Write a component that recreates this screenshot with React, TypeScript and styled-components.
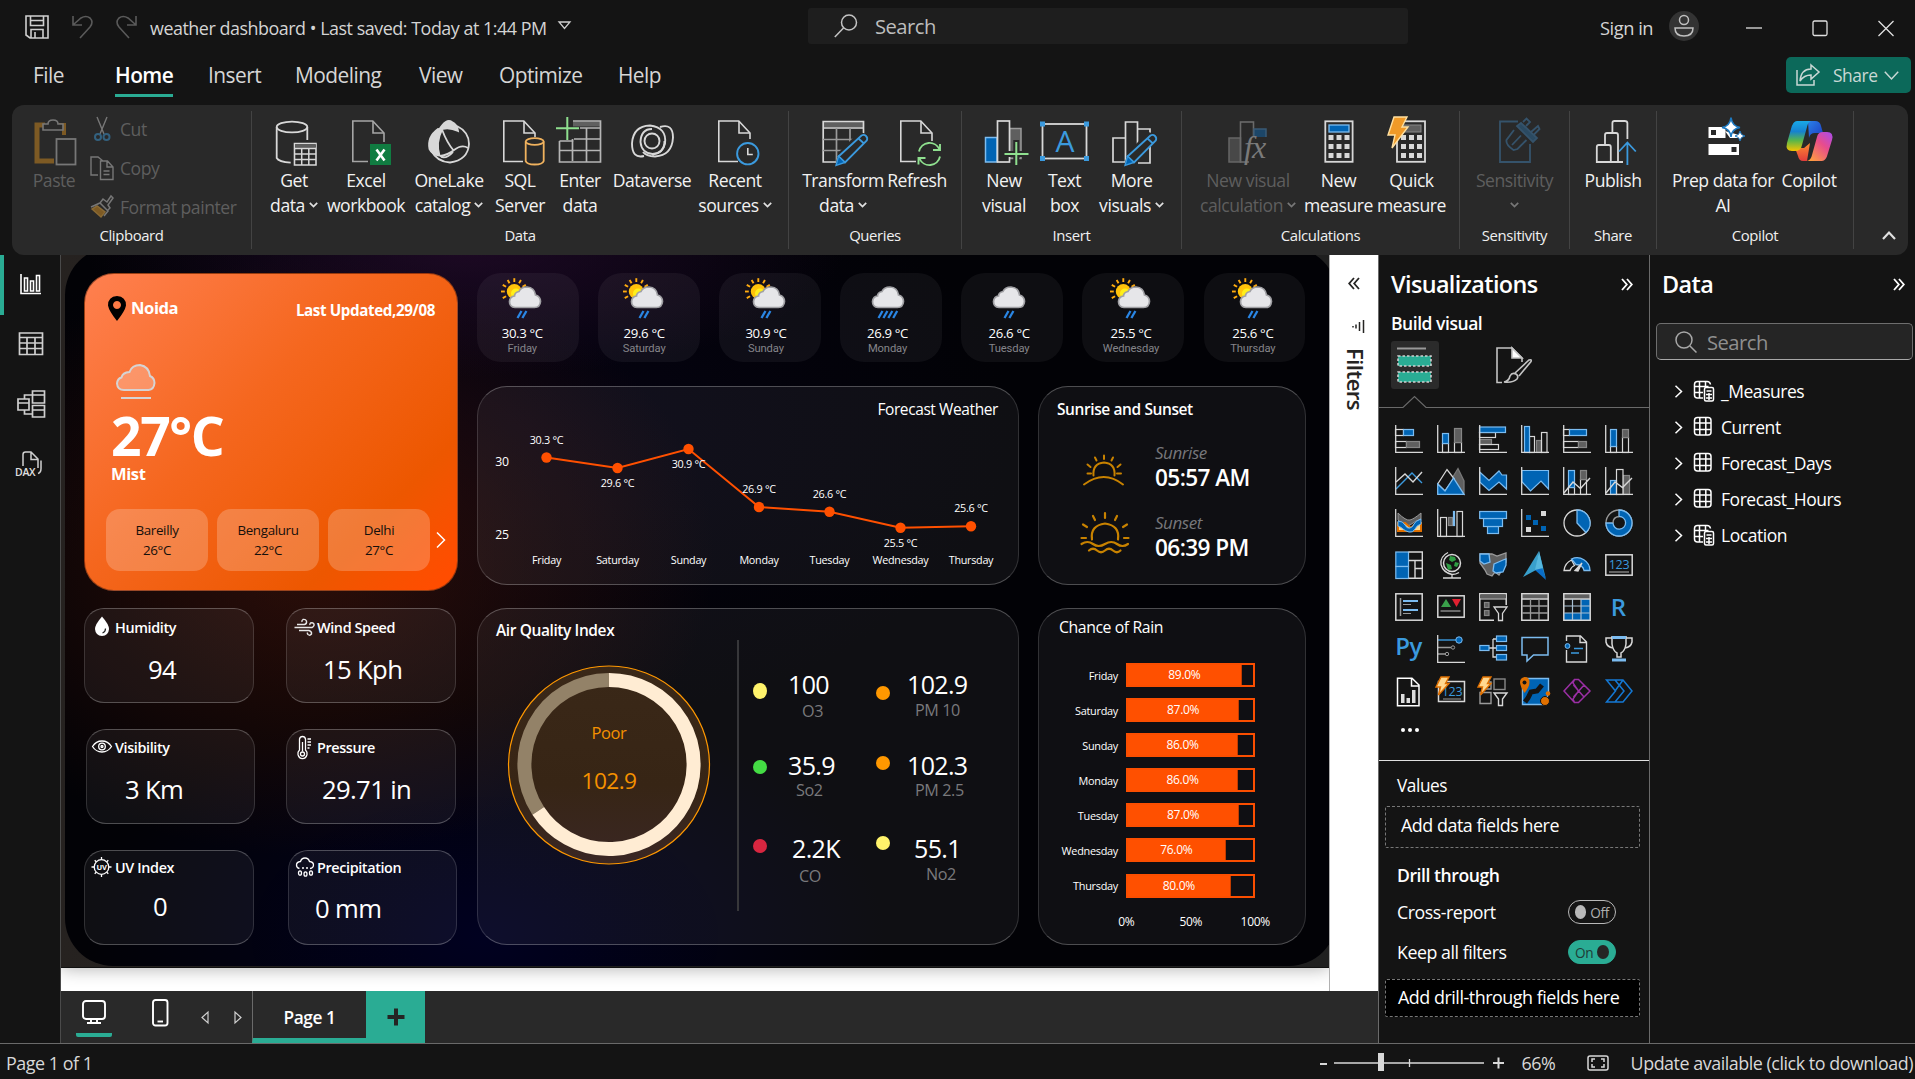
import React from "react";
import styled, { createGlobalStyle, css } from "styled-components";

const GlobalStyle = createGlobalStyle`
  * { box-sizing: border-box; letter-spacing: -0.026em; }
  html, body { margin: 0; padding: 0; background: #141414; }
  body {
    font-family: "Open Sans", "Noto Sans", sans-serif;
    color: #f2f2f2;
    overflow: hidden;
  }
  svg { display: block; flex: none; overflow: visible; }
`;

const teal = "#2aac94";

/* ---------- shell ---------- */
const Window = styled.div`
  width: 1915px;
  height: 1079px;
  display: flex;
  flex-direction: column;
  background: #141414;
  overflow: hidden;
  white-space: nowrap;
`;
const TitleBar = styled.header`
  height: 50px;
  flex: none;
  display: grid;
  grid-template-columns: 808px 600px 1fr;
`;
const TitleLeft = styled.div`
  display: flex;
  align-items: center;
  padding: 4px 0 0 25px;
`;
const QuickIcons = styled.div`
  display: flex;
  gap: 23px;
  width: 125px;
`;
const FileTitle = styled.div`
  font-size: 17.9px;
  color: #d4d4d4;
  margin: 2px 11px 0 0;
`;
const SearchBox = styled.div`
  height: 36px;
  margin-top: 8px;
  background: #1e1e1e;
  border-radius: 3px;
  display: flex;
  align-items: center;
  padding-left: 26px;
  gap: 17px;
  font-size: 20.2px;
  line-height: 36px;
  color: #bdbdbd;
`;
const TitleRight = styled.div`
  display: flex;
  align-items: center;
  padding: 4px 0 0 192px;
  font-size: 18.3px;
  color: #d4d4d4;
`;
const Avatar = styled.div`
  width: 30px;
  height: 30px;
  border-radius: 50%;
  background: #333;
  margin: 0 47px 3px 16px;
  display: grid;
  place-items: center;
`;
const WindowButtons = styled.div`
  display: flex;
  gap: 50px;
  margin-top: 2px;
`;

const MenuBar = styled.nav`
  height: 55px;
  flex: none;
  display: flex;
  padding: 6px 4px 0 33px;
`;
const MenuItem = styled.div<{ $w: number; $active?: boolean; $strong?: boolean }>`
  width: ${(p) => p.$w}px;
  font-size: 20.9px;
  line-height: 38px;
  color: ${(p) => (p.$active ? "#fff" : "#d6d6d6")};
  font-weight: ${(p) => (p.$active ? 600 : p.$strong ? 500 : 400)};
  span {
    display: inline-block;
    height: 41px;
    border-bottom: ${(p) => (p.$active ? `3px solid ${teal}` : "0")};
  }
`;
const ShareButton = styled.div`
  margin: 1px 0 0 auto;
  width: 125px;
  height: 36px;
  border-radius: 5px;
  background: #0c695a;
  display: flex;
  align-items: center;
  gap: 13px;
  padding-left: 10px;
  font-size: 17.4px;
  color: #c9d8d5;
  span { margin-right: -6px; }
`;

/* ---------- ribbon ---------- */
const Ribbon = styled.section`
  height: 150px;
  flex: none;
  margin: 0 7px 0 12px;
  padding: 6px 0;
  background: #292929;
  border-radius: 12px;
  display: flex;
`;
const RibbonGroup = styled.div<{ $w: number }>`
  width: ${(p) => p.$w}px;
  height: 138px;
  border-right: 1px solid #434343;
  display: flex;
  flex-direction: column;
`;
const RibbonBody = styled.div<{ $pad?: number }>`
  height: 108px;
  display: flex;
  padding-left: ${(p) => p.$pad ?? 0}px;
`;
const RibbonLabel = styled.div`
  font-size: 14.9px;
  line-height: 33px;
  height: 30px;
  text-align: center;
  color: #f0f0f0;
`;
const RibbonItem = styled.div<{ $w: number; $off?: boolean }>`
  width: ${(p) => p.$w}px;
  display: flex;
  flex-direction: column;
  align-items: center;
  padding-top: 6px;
  font-size: 17.6px;
  line-height: 24.5px;
  color: ${(p) => (p.$off ? "#5e5e5e" : "#f2f2f2")};
  > svg { margin-bottom: 3px; }
`;
const ItemLine = styled.div`
  display: flex;
  align-items: center;
  gap: 4px;
  height: 24.5px;
`;
const SmallCommands = styled.div`
  display: flex;
  flex-direction: column;
  margin-left: 3px;
  gap: 15px;
  font-size: 17.6px;
  line-height: 24px;
  color: #5e5e5e;
  padding-top: 6px;
`;
const SmallCommand = styled.div`
  display: flex;
  align-items: center;
  gap: 6px;
  height: 24px;
`;
const RibbonToggle = styled.div`
  flex: 1;
  display: flex;
  justify-content: center;
  align-items: flex-end;
  padding: 0 0 9px 21px;
  margin-right: 6px;
`;

/* ---------- main ---------- */
const Main = styled.main`
  height: 788px;
  flex: none;
  display: flex;
`;
const SideNav = styled.aside`
  width: 61px;
  border-right: 1px solid #4a4a4a;
`;
const NavItem = styled.div<{ $active?: boolean }>`
  height: 60px;
  display: flex;
  align-items: center;
  padding-left: ${(p) => (p.$active ? 11 : 15)}px;
  border-left: ${(p) => (p.$active ? `4px solid ${teal}` : "0")};
`;
const Center = styled.div`
  width: 1318px;
  display: flex;
  flex-direction: column;
`;
const Workspace = styled.div`
  height: 736px;
  display: flex;
`;
const PageArea = styled.div`
  width: 1268px;
  background: #fff;
  overflow: hidden;
`;
const Page = styled.div`
  height: 713px;
  overflow: hidden;
  background: linear-gradient(90deg, #262220 0%, #1d1d1d 40%, #202020 100%);
  box-shadow: 0 1px 16px rgba(0, 0, 0, 0.3);
  border-bottom: 1px solid #111;
`;
const Board = styled.div`
  width: 1272px;
  height: 719px;
  margin: -8px 0 0 4px;
  border-radius: 48px;
  display: flex;
  gap: 19px;
  padding: 26px 0 0 19px;
  background:
    radial-gradient(380px 130px at 400px 0px, rgba(46, 14, 52, 0.6), transparent),
    radial-gradient(400px 300px at 250px 310px, rgba(58, 18, 8, 0.75), transparent),
    radial-gradient(400px 240px at 420px 690px, rgba(0, 0, 50, 0.6), transparent),
    radial-gradient(500px 300px at 450px 180px, rgba(8, 4, 30, 0.5), transparent),
    #020206;
`;
const LeftColumn = styled.div`
  width: 374px;
`;
const RightColumn = styled.div`
  width: 829px;
`;

const CurrentCard = styled.div`
  height: 318px;
  border-radius: 30px;
  padding: 22px 22px 0 21px;
  background: linear-gradient(135deg, #ff8050 0%, #f5671f 42%, #ed5700 78%, #ff4d00 96%);
  border: 1px solid rgba(90, 40, 20, 0.6);
  color: #fff;
`;
const CurrentHeader = styled.div`
  display: flex;
  height: 29px;
  padding-left: 1px;
`;
const Place = styled.div`
  font-size: 16.6px;
  font-weight: 700;
  line-height: 24px;
  margin-left: 4px;
`;
const Updated = styled.div`
  margin-left: auto;
  font-size: 15.2px;
  font-weight: 700;
  line-height: 29px;
`;
const CloudSlot = styled.div`
  padding: 39px 0 0 10px;
  height: 84px;
`;
const Temperature = styled.div`
  font-size: 53.4px;
  font-weight: 700;
  line-height: 54px;
  padding-left: 5px;
`;
const Condition = styled.div`
  font-size: 16.6px;
  font-weight: 700;
  line-height: 24px;
  margin: -1px 0 23px 5px;
`;
const CityRow = styled.div`
  display: flex;
  gap: 9px;
  align-items: center;
`;
const City = styled.div`
  flex: none;
  width: 102px;
  height: 62px;
  border-radius: 14px;
  background: rgba(255, 255, 255, 0.21);
  color: #15100c;
  font-size: 13.4px;
  line-height: 20px;
  font-weight: 500;
  text-align: center;
  padding-top: 11px;
`;
const CityNext = styled.div`
  margin-left: -3px;
`;

const glass = css`
  border: 1px solid rgba(255, 255, 255, 0.14);
  border-top-color: rgba(255, 255, 255, 0.26);
  border-bottom-color: rgba(255, 255, 255, 0.26);
  background: rgba(255, 255, 255, 0.055);
`;

const MetricGrid = styled.div`
  margin-top: 17px;
  display: grid;
  grid-template-columns: 202px 172px;
  grid-auto-rows: 95px;
  row-gap: 26px;
`;
const MetricCard = styled.div<{ $dx?: number }>`
  ${glass}
  margin-left: ${(p) => p.$dx ?? 0}px;
  width: ${(p) => (p.$dx ? 169 : 170)}px;
  height: 95px;
  border-radius: 20px;
`;
const MetricTitle = styled.div<{ $dx?: number; $up: number }>`
  display: flex;
  align-items: center;
  gap: 2px;
  height: 26px;
  margin: ${(p) => 5 - p.$up}px 0 ${(p) => p.$up}px ${(p) => 6 - (p.$dx ?? 0)}px;
  font-size: 14.4px;
  font-weight: 600;
  color: #fff;
`;
const MetricValue = styled.div<{ $x: number; $y?: number }>`
  margin-top: ${(p) => 13 + (p.$y ?? 0)}px;
  padding-left: ${(p) => p.$x}px;
  font-size: 25.7px;
  line-height: 34px;
  color: #fff;
`;

const DayRow = styled.div`
  display: flex;
  gap: 19.6px;
`;
const DayCard = styled.div<{ $shift: number }>`
  width: 101.5px;
  height: 89px;
  border-radius: 24px;
  background: rgba(255, 255, 255, 0.05);
  padding: 4px ${(p) => p.$shift * 2}px 0 0;
  display: flex;
  flex-direction: column;
  align-items: center;
`;
const DayTemp = styled.div`
  font-size: 13.2px;
  line-height: 20px;
  margin-top: 2px;
  color: #fff;
`;
const DayName = styled.div`
  font-family: Roboto, sans-serif;
  font-size: 11.2px;
  letter-spacing: -0.01em;
  line-height: 14px;
  margin-top: -1px;
  color: #85858a;
`;

const PanelRow = styled.div<{ $h: number; $mt: number }>`
  display: flex;
  justify-content: space-between;
  height: ${(p) => p.$h}px;
  margin-top: ${(p) => p.$mt}px;
`;
const Panel = styled.div<{ $w: number }>`
  ${glass}
  width: ${(p) => p.$w}px;
  border-radius: 30px;
`;
const PanelTitle = styled.div<{ $pad: number; $strong?: boolean; $lh?: number }>`
  font-size: ${(p) => (p.$strong ? 15.5 : 15.8)}px;
  font-weight: ${(p) => (p.$strong ? 600 : 400)};
  line-height: ${(p) => p.$lh ?? 45}px;
  height: 46px;
  padding-left: ${(p) => p.$pad}px;
  color: #fff;
`;
const SunRow = styled.div<{ $h: number }>`
  display: flex;
  height: ${(p) => p.$h}px;
  padding-left: 40px;
`;
const SunIconSlot = styled.div`
  width: 76px;
`;
const SunText = styled.div`
  padding-top: 9px;
`;
const SunLabel = styled.div`
  font-size: 17px;
  font-style: italic;
  line-height: 22px;
  color: #77777b;
`;
const SunTime = styled.div`
  font-size: 22.6px;
  font-weight: 600;
  line-height: 28px;
  color: #fff;
`;

const AirPanel = styled(Panel)`
  display: flex;
`;
const AirLeft = styled.div`
  width: 259px;
`;
const GaugeSlot = styled.div`
  padding: 10px 0 0 30px;
`;
const AirDivider = styled.div`
  width: 2px;
  height: 271px;
  margin-top: 31px;
  background: #37373a;
`;
const Pollutants = styled.div`
  display: grid;
  grid-template-columns: 123px auto;
  grid-template-rows: 81px 83px 60px;
  padding: 60px 0 0 14px;
`;
const Pollutant = styled.div`
  display: flex;
`;
const Dot = styled.div<{ $c: string; $y: number; $tall?: boolean }>`
  width: 14px;
  height: ${(p) => (p.$tall ? 16 : 14)}px;
  border-radius: 50%;
  background: ${(p) => p.$c};
  margin-top: ${(p) => p.$y}px;
`;
const PollutantText = styled.div`
  display: flex;
  flex-direction: column;
`;
const PollutantValue = styled.div<{ $x: number }>`
  padding-left: ${(p) => p.$x}px;
  font-size: 25px;
  line-height: 31px;
  height: 32px;
  color: #fff;
`;
const PollutantName = styled.div<{ $x: number; $y: number }>`
  padding-left: ${(p) => p.$x}px;
  margin-top: ${(p) => p.$y}px;
  font-size: 16.2px;
  line-height: 20px;
  color: #79797c;
`;

const RainRows = styled.div`
  padding-top: 8px;
  display: flex;
  flex-direction: column;
  gap: 11.1px;
`;
const RainRow = styled.div`
  display: grid;
  grid-template-columns: 79px 129px;
  column-gap: 8px;
  height: 24px;
  align-items: center;
`;
const RainDay = styled.div`
  text-align: right;
  font-size: 10.9px;
  color: #fff;
`;
const RainTrack = styled.div`
  height: 24px;
  display: flex;
  border: 2px solid #fb4e00;
`;
const RainFill = styled.div`
  background: #ff5000;
  border-right: 1px solid #c23c00;
  color: #fff;
  font-size: 12px;
  line-height: 19px;
  text-align: center;
`;
const RainAxis = styled.div`
  display: grid;
  grid-template-columns: 64.5px 64.5px 64.5px;
  padding-left: 55px;
  margin-top: 14px;
  font-size: 12px;
  line-height: 20px;
  text-align: center;
  color: #fff;
`;

const FiltersPane = styled.div`
  width: 50px;
  background: #fff;
  border-left: 1px solid #b0b0b0;
  border-right: 1px solid #6a6a6a;
  display: flex;
  flex-direction: column;
  align-items: flex-end;
  color: #252423;
  padding: 22px 11px 0 0;
`;
const PaneArrow = styled.div`
  padding-right: 7px;
  margin-bottom: 30px;
`;
const FunnelSlot = styled.div`
  padding-right: 2px;
`;
const FiltersText = styled.div`
  writing-mode: vertical-rl;
  font-size: 22.2px;
  font-weight: 600;
  line-height: 24px;
  margin: 15px 0 0;
`;

const TabBar = styled.div`
  height: 52px;
  background: #292929;
  display: flex;
  border-right: 1px solid #6a6a6a;
`;
const ViewToggle = styled.div<{ $w: number; $ml: number; $active?: boolean }>`
  width: ${(p) => p.$w}px;
  margin-left: ${(p) => p.$ml}px;
  height: 46px;
  padding-top: 8px;
  display: flex;
  justify-content: center;
  border-bottom: ${(p) => (p.$active ? `4px solid ${teal}` : "0")};
  border-radius: 2px;
`;
const TabArrows = styled.div`
  display: flex;
  gap: 25px;
  align-items: center;
  width: 51px;
  margin-left: 32px;
  flex: 1;
`;
const PageTab = styled.div`
  width: 114px;
  border-left: 1px solid #6a6a6a;
  border-bottom: 5px solid ${teal};
  font-size: 17.3px;
  font-weight: 600;
  line-height: 53px;
  height: 52px;
  text-align: center;
  color: #fff;
`;
const AddTab = styled.div`
  width: 59px;
  background: ${teal};
  display: grid;
  place-items: center;
`;
const TabLeft = styled.div`
  width: 191px;
  display: flex;
`;

/* ---------- visualizations pane ---------- */
const VizPane = styled.section`
  width: 271px;
  border-right: 1px solid #6a6a6a;
`;
const PaneHead = styled.div`
  display: flex;
  align-items: center;
  justify-content: space-between;
  height: 58px;
  padding: 0 16px 0 12px;
  font-size: 23.4px;
  font-weight: 600;
  color: #fff;
`;
const BuildTitle = styled.div`
  font-size: 17.5px;
  font-weight: 600;
  line-height: 20px;
  padding-left: 12px;
  color: #fff;
`;
const ModeRow = styled.div`
  display: flex;
  gap: 57px;
  padding: 8px 0 0 12px;
  height: 63px;
`;
const ModeButton = styled.div<{ $active?: boolean }>`
  width: 48px;
  height: 48px;
  border-radius: 3px;
  background: ${(p) => (p.$active ? "#2b2b2b" : "transparent")};
  padding: 6px 0 0 ${(p) => (p.$active ? 6 : 0)}px;
`;
const VizGrid = styled.div`
  display: grid;
  grid-template-columns: repeat(6, 28px);
  grid-auto-rows: 28px;
  gap: 14px;
  padding: 17px 0 0 16px;
`;
const MoreDots = styled.div`
  display: flex;
  gap: 3px;
  padding: 23px 0 28px 22px;
  i { width: 4px; height: 4px; border-radius: 50%; background: #fff; }
`;
const Wells = styled.div`
  border-top: 1px solid #e0e0e0;
  padding: 14px 9px 0 6px;
  color: #fff;
  font-size: 17.9px;
`;
const WellTitle = styled.div<{ $strong?: boolean }>`
  font-size: ${(p) => (p.$strong ? 17.6 : 17.3)}px;
  font-weight: ${(p) => (p.$strong ? 600 : 400)};
  line-height: 22px;
  margin-top: ${(p) => (p.$strong ? 16 : 0)}px;
  padding-left: 12px;
`;
const DropBox = styled.div<{ $h: number; $dark?: boolean }>`
  height: ${(p) => p.$h}px;
  margin-top: ${(p) => (p.$dark ? 15 : 9)}px;
  border: 1px dashed #777;
  border-radius: 2px;
  background: ${(p) => (p.$dark ? "#000" : "transparent")};
  padding-left: ${(p) => (p.$dark ? 12 : 15)}px;
  line-height: ${(p) => p.$h - (p.$dark ? 3 : 5)}px;
`;
const SettingRow = styled.div`
  display: flex;
  justify-content: space-between;
  align-items: center;
  height: 24px;
  margin-top: 14px;
  padding: 0 24px 0 12px;
  font-size: 17.8px;
  & + & { margin-top: 16px; }
`;
const Switch = styled.div<{ $on?: boolean }>`
  width: 48px;
  height: 24px;
  border-radius: 12px;
  border: 1px solid ${(p) => (p.$on ? teal : "#b8b8b8")};
  background: ${(p) => (p.$on ? teal : "transparent")};
  color: ${(p) => (p.$on ? "#1f3b36" : "#b0b0b0")};
  display: flex;
  flex-direction: ${(p) => (p.$on ? "row-reverse" : "row")};
  align-items: center;
  gap: 4px;
  padding: 0 6px;
  font-size: 13.6px;
  &::before {
    content: "";
    width: 12px;
    height: 14px;
    border-radius: 50%;
    background: ${(p) => (p.$on ? "#252525" : "#b8b8b8")};
  }
`;

/* ---------- data pane ---------- */
const DataPane = styled.section`
  width: 265px;
  padding: 0 2px 0 6px;
`;
const DataHead = styled(PaneHead)`
  padding: 0 8px 0 6px;
`;
const DataSearch = styled.div`
  height: 37px;
  margin-top: 10px;
  border: 1px solid #6e6e6e;
  border-bottom-color: #a8a8a8;
  border-radius: 5px;
  background: #252525;
  display: flex;
  align-items: center;
  gap: 10px;
  padding-left: 18px;
  font-size: 20.2px;
  color: #8f8f8f;
`;
const TableRow = styled.div`
  display: flex;
  align-items: center;
  height: 36px;
  font-size: 17.5px;
  padding-left: 18px;
  color: #fff;
`;
const TableList = styled.div`
  padding-top: 13px;
`;
const TableIconSlot = styled.div`
  width: 28px;
  margin-left: 10px;
`;

/* ---------- status bar ---------- */
const StatusBar = styled.footer`
  height: 36px;
  border-top: 1px solid #6a6a6a;
  display: flex;
  align-items: center;
  padding: 2px 2px 0 6px;
  font-size: 17.9px;
  color: #d8d8d8;
`;
const ZoomControl = styled.div`
  margin-left: auto;
  display: flex;
  align-items: center;
`;
const ZoomText = styled.div`
  width: 65px;
  margin-left: 18px;
`;
const UpdateText = styled.div`
  margin-left: 22px;
`;

/* ---------- glyphs ---------- */
const W = "#d8d8d8";
const B = "#0064b4";
const L = "#7cbcf0";
const G = "#9a9a9a";
const g = "#5f5f5f";
const C = "#3b9ade";
const N = "#8fe08f";

const Caret = ({ c = "#e0e0e0" }: { c?: string }) => (
  <svg width="9" height="6" viewBox="0 0 9 6" fill="none" stroke={c} strokeWidth="1.7"><path d="M.8 .8 4.5 4.6 8.2 .8" /></svg>
);
const DoubleChevron = ({ left }: { left?: boolean }) => (
  <svg width="12" height="13" viewBox="0 0 12 13" fill="none" stroke={left ? "#252423" : "#fff"} strokeWidth="1.8">
    {left ? <path d="M6 1 1.2 6.5 6 12M11 1 6.2 6.5 11 12" /> : <path d="M1 1 5.8 6.5 1 12M6 1l4.8 5.5L6 12" />}
  </svg>
);
const PagePath = ({ x = 11, w = 32, c = W, cut = 24, foot = 18 }: { x?: number; w?: number; c?: string; cut?: number; foot?: number }) => (
  <g fill="none" stroke={c} strokeWidth="1.6">
    <path d={`M${x + foot + 2} 44.5H${x + 0.8}V4h${w - 12}l11.2 12V${cut}`} />
    <path d={`M${x + w - 11} 4v12h11`} />
  </g>
);
const Pencil = () => (
  <g>
    <path d="M20 49 24 35 44 15l8 2 1 5-22 22z" fill="#292929" />
    <path d="M23.5 39.5 46.5 18.5q2.5-1.5 4.5 .5t.8 4.5L30 45.5zM43.5 21.5l5.5 5" fill="none" stroke={C} strokeWidth="1.8" />
    <path d="M21 48.5 23.5 39l6.5 6.5z" fill={B} stroke={C} strokeWidth="1.4" />
  </g>
);
const CalcKeys = ({ x, y }: { x: number; y: number }) => (
  <g fill={W}>
    {[0, 1, 2].map((r) => [0, 1, 2].map((c) => <rect key={`${r}${c}`} x={x + c * 8} y={y + r * 9} width="5" height="5" />))}
  </g>
);

type RibbonGlyph = "get" | "excel" | "lake" | "sql" | "enter" | "dataverse" | "recent" | "transform" | "refresh" | "visual" | "text" | "more" | "calc" | "measure" | "quick" | "sens" | "publish" | "prep" | "copilot" | "paste";

const ribbonGlyphs: Record<RibbonGlyph, React.ReactNode> = {
  paste: (
    <g transform="translate(3 0)">
      <path d="M16 8H8v36h17" fill="none" stroke="#7d5a24" strokeWidth="5" />
      <path d="M30 8h5v10" fill="none" stroke="#7d5a24" strokeWidth="4" />
      <path d="M14 13V7h5q0-4 5-4t5 4h5v6z" fill="#292929" stroke="#777" strokeWidth="1.6" />
      <rect x="27.5" y="22" width="19" height="25.5" fill="#292929" stroke="#777" strokeWidth="1.8" />
    </g>
  ),
  get: (
    <g fill="none" stroke={W} strokeWidth="1.8">
      <ellipse cx="26" cy="10" rx="15.3" ry="5.4" />
      <path d="M10.7 10v31q2 4 14 4.6M41.3 10v13" />
      <path d="M28.5 26.500h21.500v21.500h-21.500z" strokeWidth="1.6" />
      <path d="M29 29h21" stroke={g} strokeWidth="3.6" />
      <path d="M28.500 31.500h21.500M28.500 37h21.500M28.500 42.500h21.500M35.700 31v17M42.800 31v17" strokeWidth="1.500" />
    </g>
  ),
  excel: (
    <g>
      <PagePath x={14} c="#a5a5a5" cut={25} foot={14} />
      <rect x="32" y="27" width="21" height="21" fill="#107c41" />
      <path d="M38.500 32.500 46.500 43.500M46.500 32.500 38.500 43.500" stroke="#fff" strokeWidth="2.600" />
    </g>
  ),
  lake: (
    <g fill="none" stroke={W} strokeWidth="1.800">
      <path d="M36 9Q48 15 48 27q-1 16-19 18.500Q16 45 10 33" />
      <path d="M18 13Q25 1 31 5q5 2 6 9-10-5-19-1z" fill={W} />
      <path d="M17 12Q6 20 8.500 32q3 6 10 6.500-4-13 2.500-26z" fill={W} />
      <path d="M21 12.500Q26 26 33 34M19 39Q27 38 33 33q8-6 14-2M20 40q6 2 12-5" />
    </g>
  ),
  sql: (
    <g>
      <PagePath x={11} cut={20} />
      <g fill="none" stroke="#f0b25e" strokeWidth="1.800">
        <ellipse cx="42.700" cy="24.500" rx="9" ry="3.300" />
        <path d="M33.700 24.500v19.500q1 3.500 9 3.500t9-3.500V24.500" />
      </g>
    </g>
  ),
  enter: (
    <g fill="none" stroke="#b5b5b5" strokeWidth="1.700">
      <path d="M21 7h27" stroke={g} strokeWidth="5" />
      <path d="M21 4h27.500v41H7.500V24M28 11h20M22 22h26M7.500 33.500h41M20.500 22v22M34.500 11v34M7.500 24h14" />
      <path d="M4 11.300h23M15.300 0v23" stroke={N} strokeWidth="2" />
    </g>
  ),
  dataverse: (
    <g fill="none" stroke={W} strokeWidth="1.900">
      <ellipse cx="28" cy="24" rx="7.500" ry="7.500" />
      <path d="M20 39Q8 42 8 26.500 9 9 26 8.500q17 2 15 18-2 10-12.500 10.500-11-1-12-12Q17 12 28 12" />
      <path d="M36 10Q49 6 49 20.500 48 38.500 31 39.500 22 39 19 35M40.500 24q0 12-12 13.500" />
    </g>
  ),
  recent: (
    <g>
      <PagePath x={11} cut={22} />
      <circle cx="40.800" cy="36.700" r="10.700" fill="none" stroke={C} strokeWidth="1.900" />
      <path d="M40.800 31v6.500h5" fill="none" stroke={W} strokeWidth="1.600" />
    </g>
  ),
  transform: (
    <g>
      <path d="M8 7.500h40" stroke={g} strokeWidth="5" />
      <path d="M48.500 18V4.500H8.200v40.500H22M8 11h40" fill="none" stroke={W} strokeWidth="1.700" />
      <path d="M21.500 11v34M35 11v20M8 22.500h32M8 33.500h20" fill="none" stroke="#999" strokeWidth="1.700" />
      <Pencil />
    </g>
  ),
  refresh: (
    <g>
      <PagePath x={11} cut={24} foot={14} />
      <g fill="none" stroke={N} strokeWidth="1.900">
        <path d="M30 34.500a10.800 10.800 0 0 1 20.500-2M51 27v6h-7M51 39.500a10.800 10.800 0 0 1-20.500 2M29.500 47.500v-6.500h7" />
      </g>
    </g>
  ),
  visual: (
    <g>
      <rect x="9.500" y="20.500" width="11.500" height="24.500" fill={B} stroke={L} strokeWidth="1.500" />
      <rect x="33.500" y="11.500" width="11.500" height="30" fill={g} stroke={G} strokeWidth="1.500" />
      <rect x="21.500" y="4" width="12" height="41" fill="#292929" stroke={W} strokeWidth="1.700" />
      <path d="M27 37h26M40.300 23v25" stroke="#292929" strokeWidth="6" />
      <path d="M28.500 37h24M40.300 25v23" stroke={N} strokeWidth="2" />
    </g>
  ),
  text: (
    <g>
      <rect x="5.500" y="7" width="44" height="34.500" fill="none" stroke={W} strokeWidth="1.800" />
      {[[3, 4.500], [47, 4.500], [3, 39], [47, 39]].map(([x, y]) => <rect key={`${x}${y}`} x={x} y={y} width="5" height="5" fill={C} />)}
      <text x="27.500" y="35" fontSize="30" textAnchor="middle" fill={C} fontWeight="400">A</text>
    </g>
  ),
  more: (
    <g>
      <path d="M21.500 45H9V21h12.500M21.500 45V5h12v34M33.500 12H46v34H34" fill="none" stroke={W} strokeWidth="1.700" />
      <Pencil />
    </g>
  ),
  calc: (
    <g>
      <rect x="9" y="21" width="11.500" height="24" fill="#484848" stroke="#666" strokeWidth="1.500" />
      <rect x="20.500" y="5" width="13" height="40" fill="none" stroke="#6a6a6a" strokeWidth="1.600" />
      <path d="M34 12h12v10H34z" fill="#1c4668" stroke="#3a5a74" strokeWidth="1.500" />
      <rect x="29" y="20" width="20" height="28" fill="#292929" />
      <text x="24" y="41" fontSize="32" fontStyle="italic" fontFamily="Liberation Serif, serif" fill="#7a7a7a">fx</text>
    </g>
  ),
  measure: (
    <g>
      <rect x="14.300" y="4.300" width="27.300" height="40.500" fill="none" stroke={W} strokeWidth="1.800" />
      <rect x="18" y="8" width="20" height="7" fill={B} stroke={L} strokeWidth="1.300" />
      <CalcKeys x={17.500} y={18} />
    </g>
  ),
  quick: (
    <g>
      <rect x="13" y="4.300" width="28" height="40.500" fill="none" stroke={W} strokeWidth="1.800" />
      <rect x="18" y="8" width="19" height="7" fill={g} stroke="#888" />
      <CalcKeys x={17} y={18} />
      <path d="M10 0h13l-5 10h6L8 31l3-13H4z" fill="#f09a28" stroke="#ffe0a0" strokeWidth="1.400" />
    </g>
  ),
  sens: (
    <g fill="none" stroke="#35536b" strokeWidth="1.800">
      <path d="M31 4.500H13v40.500h30V27" />
      <path d="M34 6 30 9 46 25l4-4z" fill="#2b4a61" />
      <path d="M36 5 39.500 1.500 43 5l-4 4M44 15l7-6 1.500 3-6 6" />
      <path d="M27 13 19.500 23q-1 5 7 10l4-1 9-9M25 28 34 18.500" />
    </g>
  ),
  publish: (
    <g fill="none" stroke={W} strokeWidth="1.800">
      <path d="M11.800 45V30q0-2 2-2h10q2 0 2 2v15zM20 27V18q0-2 2-2h9q2 0 2 2v27M27.400 15V6q0-2 2-2h10q3 0 3 2v16M26 45h12" />
      <path d="M42.400 48V26M34 34.500l8.400-9 8.400 9" stroke={C} />
    </g>
  ),
  prep: (
    <g>
      <path d="M13.500 10h17v11h-17zM13.500 27h30.500v11h-30.500zM30 14l5 7h9v-3" fill="#fff" />
      <path d="M16 13h5v5h-5zM36.500 30h5v5h-5z" fill="#292929" />
      <path d="M36 .5q1 8.500 9 10-8 1-9 9.500-1-8.500-9-9.500 8-1.500 9-10z" fill="#fff" stroke="#1c78c0" strokeWidth="1.600" />
      <path d="M45 14q.6 4.500 5 5-4.400.6-5 5-.6-4.400-5-5 4.400-.6 5-5z" fill="#fff" stroke="#1c78c0" />
    </g>
  ),
  copilot: (
    <g>
      <defs>
        <linearGradient id="cpA" x1="0" y1="0" x2="0" y2="1"><stop offset="0" stopColor="#19a9e8" /><stop offset=".35" stopColor="#1682d0" /><stop offset=".65" stopColor="#58b64a" /><stop offset="1" stopColor="#f5c400" /></linearGradient>
        <linearGradient id="cpB" x1="1" y1="0" x2=".2" y2="1"><stop offset="0" stopColor="#a84cf0" /><stop offset=".45" stopColor="#e84c8c" /><stop offset="1" stopColor="#ff9c40" /></linearGradient>
        <linearGradient id="cpC" x1="0" y1="0" x2="1" y2="1"><stop offset="0" stopColor="#2a80e8" /><stop offset="1" stopColor="#1c3cc0" /></linearGradient>
        <linearGradient id="cpD" x1="0" y1="0" x2="0" y2="1"><stop offset="0" stopColor="#ff8c30" /><stop offset="1" stopColor="#e03c3c" /></linearGradient>
      </defs>
      <path d="M27 4h7q5 0 6 5l2 7h-8q-5 0-6 5z" fill="url(#cpC)" />
      <path d="M14 31h9l6-5-3 18h-4q-4 0-5-5z" fill="url(#cpD)" />
      <path d="M16 4h14q-3 1-4 6l-5 18q-1 6-7 6h-3q-7 0-5-8l4-14q2-8 6-8z" fill="url(#cpA)" />
      <path d="M41 44H26q4-1 5-6l5-18q1-5 6-5h4q7 0 5 8l-4 13q-2 8-6 8z" fill="url(#cpB)" />
    </g>
  ),
};
const RibbonIcon = ({ name }: { name: RibbonGlyph }) => <svg width="56" height="48" viewBox="0 0 56 48">{ribbonGlyphs[name]}</svg>;

type Cmd = { icon: RibbonGlyph; w: number; lines: string[]; caret?: boolean; off?: boolean };
const groups: { label: string; w: number; pad?: number; items: Cmd[] }[] = [
  { label: "Data", w: 537, pad: 11, items: [
    { icon: "get", w: 62, lines: ["Get", "data"], caret: true },
    { icon: "excel", w: 82, lines: ["Excel", "workbook"] },
    { icon: "lake", w: 84, lines: ["OneLake", "catalog"], caret: true },
    { icon: "sql", w: 58, lines: ["SQL", "Server"] },
    { icon: "enter", w: 62, lines: ["Enter", "data"] },
    { icon: "dataverse", w: 82, lines: ["Dataverse"] },
    { icon: "recent", w: 84, lines: ["Recent", "sources"], caret: true },
  ] },
  { label: "Queries", w: 173, pad: 12, items: [
    { icon: "transform", w: 84, lines: ["Transform", "data"], caret: true },
    { icon: "refresh", w: 64, lines: ["Refresh"] },
  ] },
  { label: "Insert", w: 220, pad: 10, items: [
    { icon: "visual", w: 64, lines: ["New", "visual"] },
    { icon: "text", w: 57, lines: ["Text", "box"] },
    { icon: "more", w: 77, lines: ["More", "visuals"], caret: true },
  ] },
  { label: "Calculations", w: 278, pad: 10, items: [
    { icon: "calc", w: 112, lines: ["New visual", "calculation"], caret: true, off: true },
    { icon: "measure", w: 69, lines: ["New", "measure"] },
    { icon: "quick", w: 77, lines: ["Quick", "measure"] },
  ] },
  { label: "Sensitivity", w: 110, items: [{ icon: "sens", w: 109, lines: ["Sensitivity", ""], caret: true, off: true }] },
  { label: "Share", w: 87, items: [{ icon: "publish", w: 86, lines: ["Publish"] }] },
  { label: "Copilot", w: 197, pad: 13, items: [
    { icon: "prep", w: 106, lines: ["Prep data for", "AI"] },
    { icon: "copilot", w: 66, lines: ["Copilot"] },
  ] },
];

const Cloud = ({ fill, stroke, x = 0, y = 0 }: { fill: string; stroke: string; x?: number; y?: number }) => (
  <path transform={`translate(${x} ${y})`} d="M7 21.500q-5.500-.5-5.500-6 .5-5 5-5.500 0-3.500 4.500-4.500Q13 1 19 1q7.500.5 8.500 8 5 1.500 5 6.500-.5 6-6 6z" fill={fill} stroke={stroke} strokeWidth="1.700" />
);

const DayIcon = ({ sun, drops }: { sun: boolean; drops: number }) => (
  <svg width="44" height="44" viewBox="0 0 44 44">
    {sun && (
      <g>
        <g stroke="#ffab0f" strokeWidth="1.900">
          {[0, 1, 2, 3, 4, 5, 6].map((i) => {
            const a = ((i * 30 + 150) * Math.PI) / 180;
            return <path key={i} d={`M${14.300 + 9.500 * Math.cos(a)} ${14.500 + 9.500 * Math.sin(a)}L${14.300 + 13.300 * Math.cos(a)} ${14.500 + 13.300 * Math.sin(a)}`} />;
          })}
        </g>
        <circle cx="14.300" cy="14.500" r="7.500" fill="#ffc20a" />
        <circle cx="16" cy="16.500" r="5" fill="#ffef1a" />
      </g>
    )}
    <Cloud x={sun ? 8 : 5} y={9} fill="#e6e6e9" stroke="#a0a0a4" />
    <g stroke="#2a86e4" strokeWidth="2.300">
      {Array.from({ length: drops }, (_, i) => {
        const x = 23 - drops * 2.500 + i * 4.900;
        return <path key={i} d={`M${x + 3.500} 34 ${x - 0.500} 41`} />;
      })}
    </g>
  </svg>
);

const days = [
  { d: "Friday", t: "30.3 °C", sun: true, drops: 2, s: 5.5 },
  { d: "Saturday", t: "29.6 °C", sun: true, drops: 2, s: 4.7 },
  { d: "Sunday", t: "30.9 °C", sun: true, drops: 2, s: 4 },
  { d: "Monday", t: "26.9 °C", sun: false, drops: 4, s: 3.5 },
  { d: "Tuesday", t: "26.6 °C", sun: false, drops: 2, s: 3 },
  { d: "Wednesday", t: "25.5 °C", sun: true, drops: 2, s: 2.2 },
  { d: "Thursday", t: "25.6 °C", sun: true, drops: 2, s: 1.5 },
];
const forecast: [number, number, number][] = [
  [68.500, 70.500, 54], [139.500, 81, 97], [210.500, 62, 78], [281, 120, 103], [351.500, 124.700, 108], [422.500, 140.700, 157], [493, 139.300, 122],
];
const rain: [string, number][] = [["Friday", 89], ["Saturday", 87], ["Sunday", 86], ["Monday", 86], ["Tuesday", 87], ["Wednesday", 76], ["Thursday", 80]];

const ForecastChart = () => (
  <svg width="540" height="197" viewBox="0 0 540 197" fill="#fff" fontSize="10.800" textAnchor="middle">
    <text x="520" y="28" fontSize="15.500" textAnchor="end">Forecast Weather</text>
    <text x="24" y="78.500" fontSize="12.300">30</text>
    <text x="24" y="152" fontSize="12.300">25</text>
    <polyline points={forecast.map(([x, y]) => `${x},${y}`).join(" ")} fill="none" stroke="#ff5000" strokeWidth="2" />
    {forecast.map(([x, y, ly], i) => (
      <g key={i}>
        <circle cx={x} cy={y} r="5.200" fill="#ff5000" />
        <text x={x} y={ly + 3}>{days[i].t}</text>
        <text x={x} y="176.500">{days[i].d}</text>
      </g>
    ))}
  </svg>
);

const arc = (r: number, a: number) => {
  const t = ((a - 90) * Math.PI) / 180;
  return `${101 + r * Math.cos(t)} ${99.5 + r * Math.sin(t)}`;
};
const Gauge = () => (
  <svg width="202" height="200" viewBox="0 0 202 200" fill="#f59100" textAnchor="middle">
    <defs><linearGradient id="gaugeFill" x1="0" y1="0" x2="0" y2="1"><stop offset="0" stopColor="#3a2818" /><stop offset=".6" stopColor="#372515" /><stop offset="1" stopColor="#3a2724" /></linearGradient></defs>
    <ellipse cx="101" cy="100" rx="100.500" ry="99" fill="url(#gaugeFill)" stroke="#ff9800" strokeWidth="1.200" />
    <path d={`M${arc(84.600, 236.800)}A84.600 84.600 0 0 1 ${arc(84.600, 360)}`} fill="none" stroke="#938268" strokeWidth="14" />
    <path d={`M${arc(84.600, 0)}A84.600 84.600 0 1 1 ${arc(84.600, 236.800)}`} fill="none" stroke="#ffecd3" strokeWidth="14" />
    <text x="101" y="73.500" fontSize="16.500">Poor</text>
    <text x="101" y="123.500" fontSize="22.700">102.9</text>
  </svg>
);

const Drop = () => (
  <svg width="22" height="22" viewBox="0 0 22 22"><path d="M11 .5q7 8 7 12.500-.5 6.500-7 7-6.500-.5-7-7Q4 8.500 11 .5z" fill="#fff" /><path d="M14.500 12.500q0 3.500-3 4.500" fill="none" stroke="#222" strokeWidth="1.200" /></svg>
);
const Wind = () => (
  <svg width="22" height="22" viewBox="0 0 22 22" fill="none" stroke="#e8e8e8" strokeWidth="1.400"><path d="M4 8.500h7.500Q14 8 13.500 5q-1-2-3.500-1.500-1.500 1-1 2.500M1.500 11.500H19q2.500-1 2-3.500-1-2-3.500-1-1 1-.5 2M6 14.500h8M10 14.500M8 14.500h8q3 1 2.500 3.500-1.500 2-3.500.5-1-1-.5-2" /></svg>
);
const Eye = () => (
  <svg width="22" height="22" viewBox="0 0 22 22" fill="none" stroke="#fff" strokeWidth="1.300"><path d="M1.500 10.500Q5 5 11 5t9.500 5.500Q17 16 11 16T1.500 10.500z" /><circle cx="11" cy="10.500" r="3.300" /><circle cx="11" cy="10.500" r="1" /></svg>
);
const Thermometer = () => (
  <svg width="22" height="22" viewBox="0 0 22 22" fill="none" stroke="#fff" strokeWidth="1.300"><path d="M6.500 14V3q.5-2.500 3-2.500T12.500 3v11q2 2 1.500 4.500Q13 22.500 9.500 22.700 6 22.500 5 18.500 4.500 16 6.500 14zM9.500 6v9.500M14.500 3h3.500M14.500 6h3.500M14.500 9h3.500M14.500 12h2" /><circle cx="9.500" cy="18" r="2" /></svg>
);
const UV = () => (
  <svg width="22" height="22" viewBox="0 0 22 22" fill="none" stroke="#fff" strokeWidth="1.300"><circle cx="10.500" cy="11" r="7.300" /><path d="M10.500 3.500V1M10.500 21v-2.500M3 11H.5M20.500 11H18M5.200 5.700 3.700 4.200M15.800 5.700l1.500-1.500M5.200 16.300l-1.500 1.500M15.800 16.300l1.500 1.500" /><text x="10.500" y="14" fontSize="7.500" fontWeight="700" textAnchor="middle" fill="#fff" stroke="none">UV</text></svg>
);
const Hail = () => (
  <svg width="22" height="22" viewBox="0 0 22 22" fill="none" stroke="#fff" strokeWidth="1.300"><path d="M6.500 12.500Q3.500 12 3.500 9t4-3.500Q8.500 2 12 2t4.500 3.500Q20.500 6 20.500 9t-3.500 3.500M9 12h2M13 12h2" /><ellipse cx="7" cy="17" rx="1.500" ry="2.200" /><ellipse cx="12.500" cy="18" rx="1.500" ry="2.200" /><ellipse cx="18" cy="17" rx="1.500" ry="2.200" /></svg>
);

const metrics: { t: string; v: string; icon: React.ReactNode; dx?: number; x: number; y?: number; up: number }[] = [
  { t: "Humidity", v: "94", icon: <Drop />, x: 63, up: 0 },
  { t: "Wind Speed", v: "15 Kph", icon: <Wind />, x: 36, up: 0 },
  { t: "Visibility", v: "3 Km", icon: <Eye />, dx: 2, x: 38, up: 1 },
  { t: "Pressure", v: "29.71 in", icon: <Thermometer />, x: 35, up: 1 },
  { t: "UV Index", v: "0", icon: <UV />, x: 68, y: -3, up: 2 },
  { t: "Precipitation", v: "0 mm", icon: <Hail />, dx: 2, x: 26, y: -1, up: 2 },
];

const pollutants = [
  { v: "100", n: "O3", c: "#fff36b", dy: 14, x: 21, lx: 35, ly: 0, tall: true },
  { v: "102.9", n: "PM 10", c: "#ff9800", dy: 17, x: 17, lx: 25, ly: -1 },
  { v: "35.9", n: "So2", c: "#44dc44", dy: 10, x: 21, lx: 29, ly: -2 },
  { v: "102.3", n: "PM 2.5", c: "#ff9800", dy: 6, x: 17, lx: 25, ly: -2 },
  { v: "2.2K", n: "CO", c: "#d82640", dy: 6, x: 25, lx: 32, ly: 1 },
  { v: "55.1", n: "No2", c: "#fff36b", dy: 3, x: 24, lx: 36, ly: -1 },
];

/* visual gallery */
const Ax = () => <path d="M.7 0V27.300H28" fill="none" stroke={W} strokeWidth="1.300" />;
type BoxKind = "w" | "b" | "g";
const Bx = ({ k, r }: { k: BoxKind; r: [number, number, number, number] }) => (
  <rect x={r[0] + 0.5} y={r[1] + 0.5} width={r[2] - r[0]} height={r[3] - r[1]} fill={k === "b" ? B : k === "g" ? g : "none"} stroke={k === "b" ? L : k === "g" ? "#858585" : W} strokeWidth="1.200" />
);
const Bolt = () => <path d="M5 0h8L9.500 6.500H13L2.500 18 4.500 10H0z" fill="#ffd890" stroke="#e07000" strokeWidth="1.400" />;
const gallery: React.ReactNode[] = [
  <><Bx k="w" r={[0, 4, 8, 10]} /><Bx k="b" r={[8, 4, 18, 10]} /><Bx k="w" r={[0, 16, 11, 22]} /><Bx k="g" r={[11, 16, 24, 22]} /><Ax /></>,
  <><Bx k="w" r={[5, 18, 11, 27]} /><Bx k="b" r={[5, 8, 11, 18]} /><Bx k="w" r={[17, 17, 24, 27]} /><Bx k="g" r={[17, 3, 24, 17]} /><Ax /></>,
  <><Bx k="w" r={[0, 7, 16, 12]} /><Bx k="b" r={[0, 1.500, 26, 7]} /><Bx k="g" r={[0, 14, 12, 19]} /><Bx k="w" r={[0, 19, 19, 24]} /><Ax /></>,
  <><Bx k="w" r={[8, 11, 13, 27]} /><Bx k="b" r={[3, 1, 8, 27]} /><Bx k="g" r={[15, 15, 20, 27]} /><Bx k="w" r={[20, 7, 25.500, 27]} /><Ax /></>,
  <><Bx k="w" r={[0, 4, 6, 10]} /><Bx k="b" r={[6, 4, 23, 10]} /><Bx k="w" r={[0, 16, 15, 22]} /><Bx k="g" r={[15, 16, 23, 22]} /><Ax /></>,
  <><Bx k="w" r={[5, 21, 11, 27]} /><Bx k="b" r={[5, 4, 11, 21]} /><Bx k="w" r={[17, 12, 23, 27]} /><Bx k="g" r={[17, 4, 23, 12]} /><Ax /></>,
  <g fill="none" strokeWidth="1.400"><path d="M1 22 17 6l10 10" stroke={C} /><path d="M1 15 10 7l8 8 9-10" stroke={W} /><Ax /></g>,
  <g strokeWidth="1.300"><path d="M14 13 21 1.500 27 14v13z" fill={g} stroke="#777" /><path d="M.7 17 10 2.500 17 11.500 8 24z" fill="#141414" stroke={W} /><path d="M.7 17 8 24l8.500-13L27 27.300H.7z" fill={B} stroke={L} /></g>,
  <><path d="M.7 5 10 13.500 20 4l3 4h4.500v14L20 15l-10 8.500L.7 15z" fill={B} stroke={L} strokeWidth="1.200" /><Ax /></>,
  <><path d="M.7 3.500H27.500V22L20 14 9.500 24 .7 14.500z" fill={B} stroke={L} strokeWidth="1.200" /><Ax /></>,
  <><Bx k="w" r={[5, 20, 11, 27]} /><Bx k="b" r={[5, 3, 11, 20]} /><Bx k="w" r={[17, 12, 23, 27]} /><Bx k="g" r={[17, 3, 23, 12]} /><path d="M1 26 10 15l7.500 6.500L27 11" fill="none" stroke={W} strokeWidth="1.400" /><Ax /></>,
  <><Bx k="b" r={[5, 13, 11, 27]} /><Bx k="g" r={[18, 8, 24, 27]} /><Bx k="w" r={[11, 2, 17.500, 27]} /><path d="M1 26 10 15l7.500 5.500L27 11" fill="none" stroke={W} strokeWidth="1.400" /><Ax /></>,
  <><path d="M3 4q8 8 12 7t11-7v6q-6 2-11 6T3 11z" fill={g} stroke={G} /><path d="M3 14h7l6 5 5-5h5v8H3z" fill="#ffd890" stroke="#e07000" strokeWidth="2" /><path d="M3 12q5 0 7 4t5 3 4-4 7-5v5q-4 1-6 5t-6 3-6-3-5-3z" fill={B} stroke={L} /><Ax /></>,
  <><Bx k="w" r={[3, 8, 9, 27]} /><Bx k="g" r={[11, 8, 15, 16]} /><Bx k="b" r={[16, 2, 17, 16]} /><Bx k="w" r={[19.500, 2, 25, 27]} /><Ax /></>,
  <g><Bx k="b" r={[8, 17, 19, 24]} /><Bx k="b" r={[4, 9, 23, 17]} /><Bx k="b" r={[0.200, 2, 27, 9]} /></g>,
  <><g fill={B}><rect x="5" y="6" width="5" height="5" /><rect x="12" y="11" width="5" height="5" /><rect x="20" y="17" width="5" height="5" /></g><g fill={W}><rect x="20" y="2" width="5" height="5" /><rect x="5" y="18" width="5" height="5" /></g><Ax /></>,
  <g strokeWidth="1.300"><circle cx="14" cy="14" r="13" fill="none" stroke={W} /><path d="M14 1A13 13 0 0 1 23 23.500L14 14z" fill={B} stroke={L} /></g>,
  <g strokeWidth="1.300"><circle cx="14" cy="14" r="13" fill="none" stroke={G} /><path d="M14 1A13 13 0 1 1 1 14h7a6.300 6.300 0 1 0 6-6.500z" fill={B} stroke={L} /><path d="M8 14q0-6 6-6.500" fill="none" stroke={G} /></g>,
  <><Bx k="b" r={[0.300, 0.500, 13, 15]} /><Bx k="b" r={[0.300, 15, 13, 27]} /><path d="M13.500 1H27.300V27.300H13.500M13.500 9.500h14M20 9.500v18M20 17.500h7.500" fill="none" stroke={W} strokeWidth="1.400" /></>,
  <><circle cx="15" cy="12" r="8.500" fill="none" stroke={W} strokeWidth="1.500" /><path d="M13 5l5 1 1 3-4 2-3-2zM9 12l5 2 1 4-4 1zM18 11l4 1-2 4-3-1z" fill="#2f9e44" /><path d="M11 1.500q-8 4-7 12 2 8 11 10 4 0 7-2M15 23.500v3M6 27h18" fill="none" stroke={W} strokeWidth="1.300" /></>,
  <g strokeWidth="1.300"><path d="M1 3h12l5 2 9-3v9l-4 8-3 5-4-3-3 4-5-2-2-4-5-7z" fill={g} stroke={G} /><path d="M1 3h9l1 8-6 2-4-3zM15 13l9-4 3-1v6l-3 7-7 1-3-2z" fill={B} stroke={L} /></g>,
  <><path d="M18 0 2 26l13-7z" fill="#39a0cc" /><path d="M18 0v14l7 14z" fill="#2a8fc4" /><path d="M14 19l11 10-3-10-4-5z" fill="#0a6ec8" /><path d="M18 0 14 19l8-2z" fill="#56b8de" /></>,
  <g strokeWidth="1.300"><path d="M1 19.500A13 13 0 0 1 8.500 9l3 5.500Q8 16 7 19.500z" fill="none" stroke={W} /><path d="M8.500 8A13 13 0 0 1 27 19.500h-6Q20 14 13 13.500z" fill={B} stroke={L} /><path d="M12 19.500 19 12l-4 8z" fill={W} stroke={W} /></g>,
  <><rect x=".8" y="3.800" width="26.400" height="20.400" fill="none" stroke={W} strokeWidth="1.500" /><text x="14" y="18" fontSize="12.500" textAnchor="middle" fill={C}>123</text><path d="M4 21h20" stroke={G} strokeWidth="1.200" /></>,
  <><rect x=".8" y=".8" width="26.400" height="26.400" fill="none" stroke={W} strokeWidth="1.500" /><path d="M5.500 5v18" stroke={G} strokeWidth="1.500" /><path d="M8 8h15M8 17h15" stroke={L} strokeWidth="2" /><path d="M8 11.500h8M8 20.500h8" stroke={G} strokeWidth="1.200" /></>,
  <><rect x=".8" y="2.800" width="26.400" height="21.400" fill="none" stroke={W} strokeWidth="1.500" /><path d="M4 14l5-8 5 8z" fill="#3aa04a" /><path d="M15 6h9l-4.500 8z" fill="#e02030" /><path d="M3.500 18h20" stroke={G} strokeWidth="1.300" /></>,
  <><path d="M15 27.200H.8V.8h26.400V12" fill="none" stroke={W} strokeWidth="1.500" /><path d="M1 3.500h26" stroke={g} strokeWidth="4" /><path d="M1 6h26" stroke={W} /><Bx k="g" r={[5, 9, 9.500, 14]} /><Bx k="g" r={[5, 17, 9.500, 22]} /><path d="M15 14h13l-4.500 6.500v7h-4v-7z" fill="#141414" stroke={W} strokeWidth="1.300" /></>,
  <><path d="M1 3.500h26" stroke={g} strokeWidth="4" /><path d="M.8 .8h26.400v26.400H.8zM1 6h26" fill="none" stroke={W} strokeWidth="1.500" /><path d="M1 13h26M1 20h26M9.500 6v21M18 6v21" fill="none" stroke={G} strokeWidth="1.300" /></>,
  <><path d="M18 6h9v21H1v-7h17z" fill={B} /><path d="M1 3.500h26" stroke={g} strokeWidth="4" /><path d="M.8 .8h26.400v26.400H.8zM1 6h26" fill="none" stroke={W} strokeWidth="1.500" /><path d="M1 13h26M1 20h26M9.500 6v21M18 6v21" fill="none" stroke="#a8c0d4" strokeWidth="1.200" /></>,
  <text x="13" y="22.500" fontSize="24" textAnchor="middle" fill={C} fontWeight="600">R</text>,
  <text x="13.500" y="19.500" fontSize="24" textAnchor="middle" fill={C} fontWeight="600">Py</text>,
  <><path d="M1 5h18" stroke={C} strokeWidth="1.400" /><circle cx="22" cy="5" r="3.200" fill={B} stroke={L} /><path d="M1 12.500h13M1 19h7" stroke={G} strokeWidth="1.300" /><circle cx="16" cy="12.500" r="1.700" fill="none" stroke={G} /><circle cx="10" cy="19" r="1.700" fill="none" stroke={G} /><Ax /></>,
  <><path d="M10 13h7M14 4v18h4M14 4h4" fill="none" stroke={W} strokeWidth="1.300" /><Bx k="b" r={[0.300, 10, 9.500, 15]} /><Bx k="b" r={[17, 0.500, 27, 6]} /><Bx k="b" r={[17, 10, 27, 15]} /><Bx k="b" r={[17, 19, 27, 24.500]} /></>,
  <path d="M1 2.500h26V20H12.500L6 26v-6H1z" fill="none" stroke={L} strokeWidth="1.500" />,
  <><path d="M3.500 6V1h14l6 6v20h-20V15M17 1v6.500h6" fill="none" stroke={W} strokeWidth="1.400" /><circle cx="4.500" cy="11" r="2.400" fill={B} stroke={L} /><path d="M11 13.500h9M8 18h8" stroke={C} strokeWidth="1.400" /></>,
  <g fill="none" stroke={W} strokeWidth="1.500"><path d="M7 1v8q1 7 5 9v4h4v-4q4-2 5-9V1M7 3H1v4q1 5 7 6M21 3h6v4q-1 5-7 6" /><path d="M7 2.500h14M7 25h14" stroke={L} strokeWidth="3" /></g>,
  <><path d="M2.500 1.300H17L24 8v20.700H2.500zM16.500 1.300V9H24" fill="none" stroke="#fff" strokeWidth="1.500" /><path d="M6 17h3.500v9H6zM11.500 21H15v5h-3.500zM17 13h3.500v13H17z" fill="#ddd" /></>,
  <><rect x="1.500" y="4.500" width="26" height="20" fill="none" stroke={W} strokeWidth="1.500" /><text x="15" y="19" fontSize="12.500" textAnchor="middle" fill={C}>123</text><path d="M6 22h18" stroke={G} /><g transform="translate(-1 0)"><Bolt /></g></>,
  <><rect x="15" y="2" width="11" height="10.500" fill="none" stroke="#888" strokeWidth="1.400" /><path d="M1 15.500h11v11H1zM1 5h11v7H7" fill="none" stroke={G} strokeWidth="1.400" /><path d="M15 16h13l-4.500 6v6.500h-4V22z" fill="#141414" stroke={W} strokeWidth="1.400" /><g transform="translate(-1 0)"><Bolt /></g></>,
  <><path d="M4 1.500h23.500v15l-4 11H1.500V8z" fill={B} stroke={L} strokeWidth="1.400" /><path d="M21 8l-5 6-6 1-3 6-3 4" fill="none" stroke="#141414" strokeWidth="5" /><path d="M3.500 0q5 0 5 5T3.500 16Q-1 9-1 5t4.500-5z" fill="#e07000" /><circle cx="3.500" cy="5.500" r="2" fill="#141414" /><circle cx="24" cy="24" r="4.500" fill="#e07000" stroke="#141414" /><circle cx="27" cy="16.500" r="2.300" fill="#e07000" /></>,
  <g fill="none" stroke="#9a2fa4" strokeWidth="1.500"><path d="M1 14 11.500 2.500h4L27 14 15.500 25.500h-4zM11.500 2.500 10 6l5.500 8L10 22l1.500 3.500M21 8 10.500 20M10.500 8 21 20" /></g>,
  <g fill="none" stroke="#1478d4" strokeWidth="1.500"><path d="M1.500 3H18l9 11-9 11H1.500l9-11zM10 3l9 11-9 11M18 3l-8 11" /></g>,
];

const TableGlyph = ({ calc }: { calc?: boolean }) => (
  <svg width="23" height="22" viewBox="0 0 23 22" fill="none" stroke="#fff" strokeWidth="1.500">
    {calc ? (
      <>
        <path d="M10 18H4.500Q1.500 18 1.500 15V4.500q0-3 3-3H14q3 0 3.500 3M1.500 6.500h14M1.500 12.500H10M6.500 1.500V18M12.500 1.500V6" />
        <rect x="11.500" y="7.500" width="9" height="13.500" rx="1.500" />
        <path d="M13.500 11h5M13 14.500h6M13 18h6M16 13v7" />
      </>
    ) : (
      <path d="M4.500 1.500H15q3 0 3 3V16q0 3-3 3H4.500q-3 0-3-3V4.500q0-3 3-3zM1.500 7H18M1.500 13.500H18M6.800 1.500V19M12.800 1.500V19" />
    )}
  </svg>
);

const Mist = () => (
  <svg width="40" height="37" viewBox="0 0 40 37" fill="none" stroke="#d6d3d3" strokeWidth="2"><path d="M8 26Q1.500 26 1 19.500q.5-5 4.500-6 1-5 8-5.500Q16 1 24 1q9 1.500 10 11 4.500 2 4.500 7-.5 6.500-6 7z" fill="rgba(255,200,180,.4)" /><path d="M5 34h30" /></svg>
);
const Sunrise = () => (
  <svg width="48" height="48" viewBox="-3 -21.5 48 48" fill="none" stroke="#c88200" strokeWidth="2" strokeLinecap="round">
    <path d="M2 30Q22 15 41 30M11.500 21q-1-12 10.500-13 11.500 1 10.500 13M22 4.500V1M14.500 6 13 3M29.500 6 31 3M8.500 12.500 5.500 10M35.500 12.500l3-2.500M9 19H5.500M35 19h4" />
  </svg>
);
const Sunset = () => (
  <svg width="50" height="60" viewBox="-1 -9 50 60" fill="none" stroke="#c88200" strokeWidth="2.200" strokeLinecap="round">
    <path d="M1.500 32q6-4 11.500 0t12 0 12 0 11 0M9 38.500q4-3.500 8 0t8 0 8 0 7.500 0M12 27.500q-2-14 13-16 15 2 13 16M25 6V1M15 8l-2-4M35 8l2-4M7 15 3 12.500M43 15l4-2.500M6 26H1.500M44 26h4.500" />
  </svg>
);

export default function App() {
  return (
    <>
      <GlobalStyle />
      <Window>
        <TitleBar>
          <TitleLeft>
            <QuickIcons>
              <svg width="24" height="24" viewBox="0 0 24 24" fill="none" stroke="#cfcfcf" strokeWidth="1.600"><path d="M1 1h22v22H5l-4-3zM5.500 1v9.500h13V1M6 23v-8.500h12V23M10 17v6M6 5.500h12" /></svg>
              <svg width="21" height="24" viewBox="0 0 21 24" fill="none" stroke="#5a5a5a" strokeWidth="1.600"><path d="M1 1v9h9M1.500 9.500 9 3q5-3 9 0 4 4 0 9L8 23" /></svg>
              <svg width="21" height="24" viewBox="0 0 21 24" fill="none" stroke="#5a5a5a" strokeWidth="1.600"><path d="M20 1v9h-9M19.500 9.500 12 3Q7 0 3 3q-4 4 0 9l10 11" /></svg>
            </QuickIcons>
            <FileTitle>weather dashboard • Last saved: Today at 1:44 PM</FileTitle>
            <svg width="13" height="12" viewBox="0 0 13 12" fill="none" stroke="#d0d0d0" strokeWidth="1.300"><path d="M1 1h11L6.500 7.500z" /></svg>
          </TitleLeft>
          <SearchBox>
            <svg width="24" height="24" viewBox="0 0 24 24" fill="none" stroke="#c4c4c4" strokeWidth="1.500"><circle cx="15" cy="8.500" r="7.500" /><path d="M9.500 14 .8 23" /></svg>
            Search
          </SearchBox>
          <TitleRight>
            Sign in
            <Avatar>
              <svg width="20" height="24" viewBox="0 0 20 24" fill="none" stroke="#c0c0c0" strokeWidth="1.500"><circle cx="10" cy="6" r="4.500" /><path d="M1 14h18q0 8-9 8t-9-8z" /></svg>
            </Avatar>
            <WindowButtons>
              <svg width="16" height="17" viewBox="0 0 16 17" stroke="#e0e0e0" strokeWidth="1.300"><path d="M0 8h16" /></svg>
              <svg width="16" height="17" viewBox="0 0 16 17" fill="none" stroke="#e0e0e0" strokeWidth="1.300"><rect x="1" y="1" width="14" height="14.500" rx="1.500" /></svg>
              <svg width="16" height="17" viewBox="0 0 16 17" stroke="#e0e0e0" strokeWidth="1.300"><path d="M.5 1 15.500 16M15.500 1 .5 16" /></svg>
            </WindowButtons>
          </TitleRight>
        </TitleBar>

        <MenuBar>
          <MenuItem $w={82} $strong><span>File</span></MenuItem>
          <MenuItem $w={93} $active><span>Home</span></MenuItem>
          <MenuItem $w={87}><span>Insert</span></MenuItem>
          <MenuItem $w={124}><span>Modeling</span></MenuItem>
          <MenuItem $w={80}><span>View</span></MenuItem>
          <MenuItem $w={119}><span>Optimize</span></MenuItem>
          <MenuItem $w={60}><span>Help</span></MenuItem>
          <ShareButton>
            <svg width="24" height="22" viewBox="0 0 24 22" fill="none" stroke="#c9d8d5" strokeWidth="1.500"><path d="M1 6v15h17v-5M15 1l8 7-8 7v-4q-7 0-11 6 1-12 11-12z" /></svg>
            <span>Share</span>
            <svg width="15" height="9" viewBox="0 0 15 9" fill="none" stroke="#c9d8d5" strokeWidth="1.500"><path d="M.8 .8 7.500 8l6.700-7.200" /></svg>
          </ShareButton>
        </MenuBar>

        <Ribbon>
          <RibbonGroup $w={240}>
            <RibbonBody $pad={9}>
              <RibbonItem $w={66} $off>
                <RibbonIcon name="paste" />
                <ItemLine>Paste</ItemLine>
              </RibbonItem>
              <SmallCommands>
                <SmallCommand>
                  <svg width="24" height="24" viewBox="0 0 24 24" fill="none" stroke="#777" strokeWidth="1.400"><path d="M7 0 14 17M17 0 10 17" /><circle cx="8" cy="20" r="3" stroke="#33617f" strokeWidth="2" /><circle cx="16.500" cy="20" r="3" stroke="#33617f" strokeWidth="2" /></svg>
                  Cut
                </SmallCommand>
                <SmallCommand>
                  <svg width="24" height="24" viewBox="0 0 24 24" fill="none" stroke="#777" strokeWidth="1.400"><path d="M8 19H1V1h7l5 4M10.500 5h7l5.500 6v12.500H10.500zM17 5v6h6M13.500 15h6M13.500 18.500h6" /></svg>
                  Copy
                </SmallCommand>
                <SmallCommand>
                  <svg width="24" height="24" viewBox="0 0 24 24" fill="none" stroke="#777" strokeWidth="1.500"><path d="M2 14l9 8 4-5-8-6z" fill="#7d5a24" stroke="#8a6a34" /><path d="M1 12l9-4 8 8-4 5M10 8l3-4 4 3 4-6 2 2-5 7 2 3-3 3" /></svg>
                  Format painter
                </SmallCommand>
              </SmallCommands>
            </RibbonBody>
            <RibbonLabel>Clipboard</RibbonLabel>
          </RibbonGroup>
          {groups.map((gr) => (
            <RibbonGroup key={gr.label} $w={gr.w}>
              <RibbonBody $pad={gr.pad}>
                {gr.items.map((it) => (
                  <RibbonItem key={it.icon} $w={it.w} $off={it.off}>
                    <RibbonIcon name={it.icon} />
                    {it.lines.map((ln, i) => (
                      <ItemLine key={i}>
                        {ln && <span>{ln}</span>}
                        {it.caret && i === it.lines.length - 1 && <Caret c={it.off ? "#777" : undefined} />}
                      </ItemLine>
                    ))}
                  </RibbonItem>
                ))}
              </RibbonBody>
              <RibbonLabel>{gr.label}</RibbonLabel>
            </RibbonGroup>
          ))}
          <RibbonToggle>
            <svg width="14" height="9" viewBox="0 0 14 9" fill="none" stroke="#e0e0e0" strokeWidth="2.200"><path d="M1 8l6-6.500L13 8" /></svg>
          </RibbonToggle>
        </Ribbon>

        <Main>
          <SideNav>
            <NavItem $active>
              <svg width="30" height="24" viewBox="0 0 30 24" fill="none" stroke="#fff" strokeWidth="1.600"><path d="M6 1v19.500h20M9.500 5h3v13h-3zM15.500 8h3v10h-3zM21.500 2.500h3V18h-3z" /></svg>
            </NavItem>
            <NavItem>
              <svg width="30" height="24" viewBox="0 0 30 24" fill="none" stroke="#cfcfcf" strokeWidth="1.700"><path d="M4.500 0h23v21.500h-23zM4.500 4.500h23M4.500 10h23M4.500 15.500h23M12 4.500v17M20 4.500v17" /></svg>
            </NavItem>
            <NavItem>
              <svg width="30" height="28" viewBox="0 0 30 28" fill="none" stroke="#cfcfcf" strokeWidth="1.700"><path d="M17.500 0h12v12h-12zM17.500 4h12M17.500 14.500h12v11.500h-12zM17.500 19h12M3 8h11v11H3zM3 12h11M9.500 8V4h8M9.500 19v4h8" /></svg>
            </NavItem>
            <NavItem>
              <svg width="30" height="26" viewBox="0 0 30 26" fill="none" stroke="#cfcfcf" strokeWidth="1.500"><path d="M8 14V2.500q0-2.500 2.500-2.500H16l7 7V16M16 0V7.500h7M26 8.500v8q0 4-3 5" /><text x="0" y="24" fontSize="10.500" fontWeight="600" fill="#e0e0e0" stroke="none">DAX</text></svg>
            </NavItem>
          </SideNav>

          <Center>
            <Workspace>
              <PageArea>
                <Page>
                  <Board>
                    <LeftColumn>
                      <CurrentCard>
                        <CurrentHeader>
                          <svg width="20" height="25" viewBox="0 0 20 25"><path d="M10 0q9 .5 9 9.500Q18 15 10 25 2 15 1 9.500 1 .5 10 0zm0 5a4 4 0 1 0 .01 0z" fill="#000" fillRule="evenodd" /></svg>
                          <Place>Noida</Place>
                          <Updated>Last Updated,29/08</Updated>
                        </CurrentHeader>
                        <CloudSlot><Mist /></CloudSlot>
                        <Temperature>27°C</Temperature>
                        <Condition>Mist</Condition>
                        <CityRow>
                          <City>Bareilly<br />26°C</City>
                          <City>Bengaluru<br />22°C</City>
                          <City>Delhi<br />27°C</City>
                          <CityNext>
                            <svg width="10" height="16" viewBox="0 0 10 16" fill="none" stroke="#fff" strokeWidth="1.500"><path d="M1 .5 8.500 8 1 15.500" /></svg>
                          </CityNext>
                        </CityRow>
                      </CurrentCard>
                      <MetricGrid>
                        {metrics.map((m) => (
                          <MetricCard key={m.t} $dx={m.dx}>
                            <MetricTitle $dx={m.dx} $up={m.up}>{m.icon}{m.t}</MetricTitle>
                            <MetricValue $x={m.x} $y={m.y}>{m.v}</MetricValue>
                          </MetricCard>
                        ))}
                      </MetricGrid>
                    </LeftColumn>

                    <RightColumn>
                      <DayRow>
                        {days.map((d) => (
                          <DayCard key={d.d} $shift={d.s}>
                            <DayIcon sun={d.sun} drops={d.drops} />
                            <DayTemp>{d.t}</DayTemp>
                            <DayName>{d.d}</DayName>
                          </DayCard>
                        ))}
                      </DayRow>
                      <PanelRow $h={199} $mt={24}>
                        <Panel $w={542}><ForecastChart /></Panel>
                        <Panel $w={268}>
                          <PanelTitle $pad={18} $strong>Sunrise and Sunset</PanelTitle>
                          <SunRow $h={70}>
                            <SunIconSlot><Sunrise /></SunIconSlot>
                            <SunText><SunLabel>Sunrise</SunLabel><SunTime>05:57 AM</SunTime></SunText>
                          </SunRow>
                          <SunRow $h={70}>
                            <SunIconSlot><Sunset /></SunIconSlot>
                            <SunText><SunLabel>Sunset</SunLabel><SunTime>06:39 PM</SunTime></SunText>
                          </SunRow>
                        </Panel>
                      </PanelRow>
                      <PanelRow $h={337} $mt={23}>
                        <AirPanel $w={542}>
                          <AirLeft>
                            <PanelTitle $pad={18} $strong $lh={42}>Air Quality Index</PanelTitle>
                            <GaugeSlot><Gauge /></GaugeSlot>
                          </AirLeft>
                          <AirDivider />
                          <Pollutants>
                            {pollutants.map((p) => (
                              <Pollutant key={p.n}>
                                <Dot $c={p.c} $y={p.dy} $tall={p.tall} />
                                <PollutantText>
                                  <PollutantValue $x={p.x}>{p.v}</PollutantValue>
                                  <PollutantName $x={p.lx} $y={p.ly}>{p.n}</PollutantName>
                                </PollutantText>
                              </Pollutant>
                            ))}
                          </Pollutants>
                        </AirPanel>
                        <Panel $w={268}>
                          <PanelTitle $pad={20} $lh={36}>Chance of Rain</PanelTitle>
                          <RainRows>
                            {rain.map(([d, v]) => (
                              <RainRow key={d}>
                                <RainDay>{d}</RainDay>
                                <RainTrack><RainFill style={{ width: `${v + 2}%` }}>{v.toFixed(1)}%</RainFill></RainTrack>
                              </RainRow>
                            ))}
                          </RainRows>
                          <RainAxis><span>0%</span><span>50%</span><span>100%</span></RainAxis>
                        </Panel>
                      </PanelRow>
                    </RightColumn>
                  </Board>
                </Page>
              </PageArea>
              <FiltersPane>
                <PaneArrow><DoubleChevron left /></PaneArrow>
                <FunnelSlot>
                  <svg width="13" height="13" viewBox="0 0 13 13" stroke="#252423" strokeWidth="1.500"><path d="M11.500 0v13M7.500 2v9M4 4.500v4M1 6v1.500" /></svg>
                </FunnelSlot>
                <FiltersText>Filters</FiltersText>
              </FiltersPane>
            </Workspace>
            <TabBar>
              <TabLeft>
                <ViewToggle $w={36} $ml={15} $active>
                  <svg width="24" height="25" viewBox="0 0 24 25" fill="none" stroke="#fff" strokeWidth="1.900"><rect x="1" y="2" width="22" height="18" rx="3" /><path d="M9 20v3.500M15 20v3.500M5 24h14" /></svg>
                </ViewToggle>
                <ViewToggle $w={18} $ml={39}>
                  <svg width="17" height="28" viewBox="0 0 17 28" fill="none" stroke="#fff" strokeWidth="1.900"><rect x="1" y="1" width="14.500" height="25.500" rx="2.500" /><path d="M5.500 22.500h5.500" /></svg>
                </ViewToggle>
                <TabArrows>
                  <svg width="8" height="13" viewBox="0 0 8 13" fill="none" stroke="#d0d0d0" strokeWidth="1.200"><path d="M7 1v11L1 6.500z" /></svg>
                  <svg width="8" height="13" viewBox="0 0 8 13" fill="none" stroke="#d0d0d0" strokeWidth="1.200"><path d="M1 1v11l6-5.500z" /></svg>
                </TabArrows>
              </TabLeft>
              <PageTab>Page 1</PageTab>
              <AddTab>
                <svg width="18" height="18" viewBox="0 0 18 18" stroke="#252423" strokeWidth="4"><path d="M9 .5v17M.5 9h17" /></svg>
              </AddTab>
            </TabBar>
          </Center>

          <VizPane>
            <PaneHead>Visualizations<DoubleChevron /></PaneHead>
            <BuildTitle>Build visual</BuildTitle>
            <ModeRow>
              <ModeButton $active>
                <svg width="36" height="36" viewBox="0 0 36 36"><path d="M0 1.500h29" stroke="#999" strokeWidth="2" /><g fill={teal} stroke="#cfcfcf" strokeWidth="1.600" strokeDasharray="2.500 2"><rect x="1" y="9" width="33" height="10" /><rect x="1" y="25" width="33" height="10" /></g></svg>
              </ModeButton>
              <ModeButton>
                <svg width="36" height="36" viewBox="0 0 36 36" fill="none" stroke="#c4c4c4" strokeWidth="1.600"><path d="M6 35.500H1V1h15l10 10v4" /><path d="M16 1v10h10z" fill="#fff" /><path d="M8 35q5-1 6-6 2-4 6-2 3 2 1 5-4 4-13 3zM19 26 33 13q3-1 2 1.500L23 29" /></svg>
              </ModeButton>
            </ModeRow>
            <svg width="270" height="12" viewBox="0 0 270 12" fill="none" stroke="#6a6a6a" strokeWidth="1.200"><path d="M0 11.500H24L35.500 .5 47 11.500H270" /></svg>
            <VizGrid>
              {gallery.map((n, i) => <svg key={i} width="28" height="28" viewBox="0 0 28 28">{n}</svg>)}
            </VizGrid>
            <MoreDots><i /><i /><i /></MoreDots>
            <Wells>
              <WellTitle>Values</WellTitle>
              <DropBox $h={42}>Add data fields here</DropBox>
              <WellTitle $strong>Drill through</WellTitle>
              <SettingRow>Cross-report<Switch>Off</Switch></SettingRow>
              <SettingRow>Keep all filters<Switch $on>On</Switch></SettingRow>
              <DropBox $h={38} $dark>Add drill-through fields here</DropBox>
            </Wells>
          </VizPane>

          <DataPane>
            <DataHead>Data<DoubleChevron /></DataHead>
            <DataSearch>
              <svg width="22" height="22" viewBox="0 0 22 22" fill="none" stroke="#a8a8a8" strokeWidth="1.500"><circle cx="9" cy="9" r="8" /><path d="M15 15l6.500 6.500" /></svg>
              Search
            </DataSearch>
            <TableList>
              {[["_Measures", 1], ["Current", 0], ["Forecast_Days", 0], ["Forecast_Hours", 0], ["Location", 1]].map(([n, c]) => (
                <TableRow key={n as string}>
                  <svg width="9" height="13" viewBox="0 0 9 13" fill="none" stroke="#fff" strokeWidth="1.500"><path d="M1.500 .8 7.500 6.500l-6 5.700" /></svg>
                  <TableIconSlot><TableGlyph calc={c === 1} /></TableIconSlot>
                  {n}
                </TableRow>
              ))}
            </TableList>
          </DataPane>
        </Main>

        <StatusBar>
          Page 1 of 1
          <ZoomControl>
            <svg width="184" height="20" viewBox="0 0 184 20" stroke="#d8d8d8" fill="none"><path d="M0 11h7" strokeWidth="2" /><path d="M14 10h150M89.500 6v8" strokeWidth="1.300" /><path d="M61 0v18" strokeWidth="6" /><path d="M173 10h11M178.500 4.500v11" strokeWidth="2" /></svg>
          </ZoomControl>
          <ZoomText>66%</ZoomText>
          <svg width="22" height="16" viewBox="0 0 22 16" fill="none" stroke="#d8d8d8" strokeWidth="1.500"><rect x="1" y="1" width="20" height="14" rx="2" /><path d="M8 4H5v3M5 9v3h3M14 4h3v3M17 9v3h-3" /></svg>
          <UpdateText>Update available (click to download)</UpdateText>
        </StatusBar>
      </Window>
    </>
  );
}
